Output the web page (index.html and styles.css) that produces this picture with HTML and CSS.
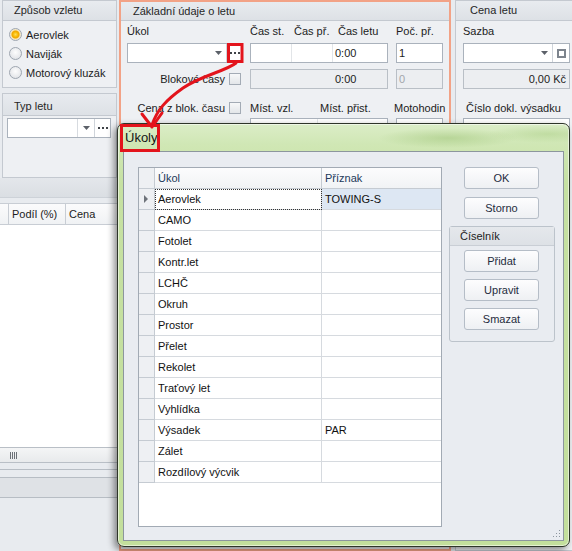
FILE: index.html
```html
<!DOCTYPE html>
<html lang="cs">
<head>
<meta charset="utf-8">
<title>Úkoly</title>
<link rel="stylesheet" href="styles.css">
</head>
<body>
<div class="form">
  <div class="col-left">
    <section class="grp grp-start">
      <div class="grp-head start-head">Způsob vzletu</div>
      <div class="radios">
        <div class="radio"><span class="rb rb-on"></span>Aerovlek</div>
        <div class="radio"><span class="rb"></span>Naviják</div>
        <div class="radio"><span class="rb"></span>Motorový kluzák</div>
      </div>
    </section>
    <section class="grp grp-typ">
      <div class="grp-head typ-head">Typ letu</div>
      <div class="typ-body">
        <div class="combo combo-typ">
          <span class="combo-val"></span>
          <span class="cbtn dd dd-sep"><svg width="7" height="4" viewBox="0 0 7 4"><path d="M0 0H7L3.5 4Z" fill="#5c6169"/></svg></span>
          <span class="cbtn ell"><svg width="10" height="2" viewBox="0 0 10 2"><rect x="0" width="2" height="2" fill="#3f4348"/><rect x="4" width="2" height="2" fill="#3f4348"/><rect x="8" width="2" height="2" fill="#3f4348"/></svg></span>
        </div>
      </div>
    </section>
    <div class="band"></div>
    <div class="lgrid-head"><span class="lc0"></span><span class="lc1">Podíl (%)</span><span class="lc2">Cena</span></div>
    <div class="lgrid-body"></div>
    <div class="hscroll"><span class="grip"></span></div>
    <div class="foot"></div>
    <div class="foot-band"></div>
  </div>

  <section class="grp-main">
    <div class="grp-head main-head">Základní údaje o letu</div>
    <div class="main-body">
      <div class="mrow mrow-lbl">
        <div class="ca">Úkol</div>
        <div class="cb sublbls"><span class="s44">Čas st.</span><span class="s44">Čas př.</span><span>Čas letu</span></div>
        <div class="cc">Poč. př.</div>
      </div>
      <div class="mrow mrow-fld">
        <div class="ca">
          <div class="combo combo-ukol">
            <span class="combo-val"></span>
            <span class="cbtn dd"><svg width="7" height="4" viewBox="0 0 7 4"><path d="M0 0H7L3.5 4Z" fill="#5c6169"/></svg></span>
            <span class="cbtn ell"><svg width="10" height="2" viewBox="0 0 10 2"><rect x="0" width="2" height="2" fill="#3f4348"/><rect x="4" width="2" height="2" fill="#3f4348"/><rect x="8" width="2" height="2" fill="#3f4348"/></svg></span>
          </div>
        </div>
        <div class="cb"><div class="field timefield"><span class="seg seg1"></span><span class="seg seg1"></span><span class="seg seg3">0:00</span></div></div>
        <div class="cc"><div class="field">1</div></div>
      </div>
      <div class="mrow mrow-fld2">
        <div class="ca chk-cell"><span>Blokové časy</span><span class="chk"></span></div>
        <div class="cb"><div class="field dis time-dis">0:00</div></div>
        <div class="cc"><div class="field dis gray">0</div></div>
      </div>
      <div class="mrow mrow-lbl2">
        <div class="ca chk-cell"><span>Cena z blok. času</span><span class="chk"></span></div>
        <div class="cb sublbls"><span class="s70">Míst. vzl.</span><span>Míst. přist.</span></div>
        <div class="cc motoh">Motohodin</div>
      </div>
      <div class="mrow mrow-fld3">
        <div class="ca"></div>
        <div class="cb"><div class="field split"><span class="seg segA"></span><span class="seg"></span></div></div>
        <div class="cc"><div class="field"></div></div>
      </div>
    </div>
  </section>

  <section class="grp grp-price">
    <div class="grp-head price-head">Cena letu</div>
    <div class="price-body">
      <div class="plbl">Sazba</div>
      <div class="combo combo-sazba">
        <span class="combo-val"></span>
        <span class="cbtn dd"><svg width="7" height="4" viewBox="0 0 7 4"><path d="M0 0H7L3.5 4Z" fill="#5c6169"/></svg></span>
        <span class="cbtn sq"><span class="sqicon"></span></span>
      </div>
      <div class="field dis price-val">0,00 Kč</div>
      <div class="plbl plbl2">Číslo dokl. výsadku</div>
      <div class="field price-f"></div>
    </div>
  </section>
</div>

<div class="dialog">
  <div class="dlg-title">Úkoly</div>
  <div class="dlg-client">
    <div class="dgrid">
      <div class="grow grow-h"><div class="gc rh"></div><div class="gc">Úkol</div><div class="gc">Příznak</div></div>
      <div class="grow cur"><div class="gc rh"><span class="tri"></span></div><div class="gc focus">Aerovlek</div><div class="gc sel">TOWING-S</div></div>
      <div class="grow"><div class="gc rh"></div><div class="gc">CAMO</div><div class="gc"></div></div>
      <div class="grow"><div class="gc rh"></div><div class="gc">Fotolet</div><div class="gc"></div></div>
      <div class="grow"><div class="gc rh"></div><div class="gc">Kontr.let</div><div class="gc"></div></div>
      <div class="grow"><div class="gc rh"></div><div class="gc">LCHČ</div><div class="gc"></div></div>
      <div class="grow"><div class="gc rh"></div><div class="gc">Okruh</div><div class="gc"></div></div>
      <div class="grow"><div class="gc rh"></div><div class="gc">Prostor</div><div class="gc"></div></div>
      <div class="grow"><div class="gc rh"></div><div class="gc">Přelet</div><div class="gc"></div></div>
      <div class="grow"><div class="gc rh"></div><div class="gc">Rekolet</div><div class="gc"></div></div>
      <div class="grow"><div class="gc rh"></div><div class="gc">Traťový let</div><div class="gc"></div></div>
      <div class="grow"><div class="gc rh"></div><div class="gc">Vyhlídka</div><div class="gc"></div></div>
      <div class="grow"><div class="gc rh"></div><div class="gc">Výsadek</div><div class="gc">PAR</div></div>
      <div class="grow"><div class="gc rh"></div><div class="gc">Zálet</div><div class="gc"></div></div>
      <div class="grow"><div class="gc rh"></div><div class="gc">Rozdílový výcvik</div><div class="gc"></div></div>
    </div>
    <div class="dside">
      <button class="btn">OK</button>
      <button class="btn btn-storno">Storno</button>
      <div class="cis">
        <div class="cis-head">Číselník</div>
        <button class="btn btn-first">Přidat</button>
        <button class="btn">Upravit</button>
        <button class="btn">Smazat</button>
      </div>
    </div>
    <svg class="rsgrip" width="9" height="9" viewBox="0 0 9 9">
      <rect x="7" y="1" width="1" height="1" fill="#8d969f"/>
      <rect x="4" y="4" width="1" height="1" fill="#8d969f"/>
      <rect x="7" y="4" width="1" height="1" fill="#8d969f"/>
      <rect x="1" y="7" width="1" height="1" fill="#8d969f"/>
      <rect x="4" y="7" width="1" height="1" fill="#8d969f"/>
      <rect x="7" y="7" width="1" height="1" fill="#8d969f"/>
    </svg>
  </div>
</div>

<svg class="annot" width="572" height="551" viewBox="0 0 572 551">
  <rect x="228.5" y="44.5" width="13.5" height="17" fill="none" stroke="#e3141c" stroke-width="3"/>
  <rect x="121.5" y="125.5" width="37" height="25" fill="none" stroke="#e3141c" stroke-width="3"/>
  <path d="M236 63 C 226 71, 200 76, 183 88 S 157 110, 152 125" fill="none" stroke="#e3141c" stroke-width="3" stroke-linecap="round"/>
  <path d="M142 114 L152 127 L162 113" fill="none" stroke="#e3141c" stroke-width="3" stroke-linecap="round" stroke-linejoin="round"/>
</svg>
</body>
</html>
```

FILE: styles.css
```css
body {
  margin: 0;
  width: 572px;
  height: 551px;
  overflow: hidden;
  position: relative;
  background: #e8ebef;
  font-family: "Liberation Sans", Arial, sans-serif;
  font-size: 11px;
  line-height: 14px;
  color: #1c1c1c;
}

.form {
  display: flex;
  align-items: flex-start;
  height: 551px;
}

/* ---------- generic group box ---------- */
.grp {
  box-sizing: border-box;
  border: 1px solid #c4c9d0;
  background: #eef0f3;
}
.grp-head {
  box-sizing: border-box;
  height: 20px;
  line-height: 19px;
  border-bottom: 1px solid #c4c9d0;
  background: linear-gradient(#e8ebef, #dde1e6);
  color: #262626;
  white-space: nowrap;
}

/* ---------- left column ---------- */
.col-left {
  width: 119px;
  flex: none;
  display: flex;
  flex-direction: column;
}
.grp-start {
  margin-left: 2px;
  width: 115px;
  height: 88px;
}
.start-head { padding-left: 11px; }
.radios { padding: 4px 0 0 6px; }
.radio {
  display: flex;
  align-items: center;
  gap: 4px;
  height: 19px;
  white-space: nowrap;
}
.rb {
  box-sizing: border-box;
  width: 13px;
  height: 13px;
  border-radius: 50%;
  border: 1px solid #9ea6b0;
  background: radial-gradient(circle at 50% 40%, #fdfdfd, #dadde2);
}
.rb-on {
  background: radial-gradient(circle, #ffdc5c 0, #f6b800 2.5px, #f0a400 3.5px, #f9e3a6 4.5px, #eceef1 6px);
}

.grp-typ {
  margin: 5px 0 0 2px;
  width: 115px;
  height: 85px;
}
.typ-head {
  height: 22px;
  padding: 3px 0 0 11px;
  line-height: 18px;
}
.typ-body { padding: 2px 0 0 4px; }

.band {
  height: 19px;
  background: linear-gradient(#e4e7eb, #dadee3);
  border-bottom: 1px solid #cdd2d8;
}
.lgrid-head {
  margin-top: 5px;
  display: flex;
  box-sizing: border-box;
  height: 22px;
  line-height: 20px;
  border-top: 1px solid #c8cdd4;
  border-bottom: 1px solid #c8cdd4;
  background: linear-gradient(#fbfbfc, #f0f2f4);
  white-space: nowrap;
}
.lc0 {
  box-sizing: border-box;
  width: 9px;
  border-right: 1px solid #c8cdd4;
}
.lc1 {
  box-sizing: border-box;
  width: 57px;
  padding-left: 3px;
  border-right: 1px solid #c8cdd4;
}
.lc2 { padding-left: 3px; }
.lgrid-body {
  height: 222px;
  background: #fff;
}
.hscroll {
  box-sizing: border-box;
  height: 16px;
  border-top: 1px solid #b9bfc6;
  border-bottom: 1px solid #b9bfc6;
  background: linear-gradient(#f4f5f6, #e8eaec);
}
.grip {
  display: block;
  margin: 4px 0 0 10px;
  width: 7px;
  height: 7px;
  background: repeating-linear-gradient(90deg, #6c7177 0 1px, transparent 1px 2px);
}
.foot {
  margin-top: 6px;
  height: 7px;
  border-top: 1px solid #b7bdc4;
}
.foot-band {
  height: 19px;
  border-top: 1px solid #b7bdc4;
  border-bottom: 1px solid #b7bdc4;
  background: #dfe2e6;
}

/* ---------- combo / fields ---------- */
.combo {
  display: flex;
  box-sizing: border-box;
  height: 20px;
  border: 1px solid #aab2bc;
  background: #fff;
}
.combo-val { flex: 1; }
.cbtn {
  flex: none;
  width: 16px;
  display: flex;
  align-items: center;
  justify-content: center;
}
.dd-sep { border-left: 1px solid #d7dbe0; }
.ell {
  width: 15px;
  border-left: 1px solid #cfd4da;
}
.combo-typ { width: 104px; }
.combo-ukol { width: 116px; }
.sq { border-left: 1px solid #cfd4da; }
.sqicon {
  box-sizing: border-box;
  width: 9px;
  height: 9px;
  border: 2px solid #7d848d;
}

.field {
  box-sizing: border-box;
  height: 20px;
  border: 1px solid #aab2bc;
  background: #fff;
  line-height: 18px;
  padding: 0 2px;
  white-space: nowrap;
  overflow: hidden;
}
.field.dis {
  background: #eceef1;
  border-color: #b9bfc6;
}
.gray { color: #a3a7ac; }

/* ---------- main group ---------- */
.grp-main {
  flex: none;
  box-sizing: border-box;
  width: 332px;
  height: 551px;
  border: 2px solid #f2a286;
  background: #eef0f3;
}
.main-head {
  height: 19px;
  line-height: 18px;
  padding-left: 12px;
}
.main-body { padding: 3px 0 0 6px; }
.mrow { display: flex; white-space: nowrap; }
.ca { width: 123px; flex: none; }
.cb { width: 146px; flex: none; }
.cc { width: 47px; flex: none; }
.cb .field { width: 138px; }
.cc .field { width: 47px; }
.mrow-lbl { height: 14px; }
.mrow-fld { margin-top: 5px; height: 20px; }
.mrow-fld2 { margin-top: 6px; height: 20px; }
.mrow-lbl2 { margin-top: 12px; height: 14px; }
.mrow-fld3 { margin-top: 3px; height: 20px; }
.sublbls { display: flex; }
.s44 { width: 44px; }
.s70 { width: 70px; }
.chk-cell {
  box-sizing: border-box;
  display: flex;
  justify-content: flex-end;
  align-items: center;
  gap: 4px;
  padding-right: 9px;
}
.chk {
  box-sizing: border-box;
  width: 12px;
  height: 12px;
  border: 1px solid #a3abb5;
  background: linear-gradient(#f7f8f9, #e3e6e9);
}
.motoh { margin-left: -2px; }
.timefield, .split {
  display: flex;
  padding: 0;
}
.seg { box-sizing: border-box; height: 18px; }
.seg1 {
  width: 41px;
  border-right: 1px solid #e2e5e8;
}
.seg3 { flex: 1; padding-left: 2px; }
.segA {
  width: 67px;
  border-right: 1px solid #e2e5e8;
}
.time-dis { padding-left: 84px; }

/* ---------- price group ---------- */
.grp-price {
  flex: none;
  margin-left: 4px;
  width: 125px;
  height: 551px;
}
.price-head { padding-left: 14px; }
.price-body { padding: 3px 0 0 7px; }
.plbl { height: 14px; white-space: nowrap; }
.combo-sazba { margin-top: 5px; width: 107px; }
.price-val {
  margin-top: 6px;
  width: 107px;
  text-align: right;
  padding-right: 3px;
}
.plbl2 { margin-top: 12px; padding-left: 3px; }
.price-f { margin-top: 3px; width: 107px; }

/* ---------- dialog ---------- */
.dialog {
  position: absolute;
  left: 117px;
  top: 123px;
  width: 453px;
  height: 424px;
  box-sizing: border-box;
  border: 1px solid #2e3529;
  border-radius: 7px;
  padding: 0 5px 5px;
  display: flex;
  flex-direction: column;
  background:
    radial-gradient(ellipse 70px 10px at 330px 14px, rgba(150, 190, 110, 0.45), transparent),
    radial-gradient(ellipse 60px 9px at 430px 10px, rgba(160, 200, 120, 0.4), transparent),
    linear-gradient(180deg, #dbedc7 0px, #d0e7b5 20px, #c6e1a2 60px, #c3df9c 100%);
  box-shadow: -3px 3px 7px rgba(0, 0, 0, 0.45), inset 0 0 0 1px rgba(255, 255, 255, 0.55);
}
.dlg-title {
  flex: none;
  height: 27px;
  line-height: 28px;
  font-size: 13px;
  padding-left: 2px;
  color: #151515;
}
.dlg-client {
  position: relative;
  flex: 1;
  border: 1px solid #8c969e;
  background: #e9ecf1;
  display: flex;
  align-items: flex-start;
  gap: 7px;
  padding: 15px 0 0 14px;
}
.dgrid {
  flex: none;
  box-sizing: border-box;
  width: 304px;
  height: 360px;
  border: 1px solid #a2aab4;
  background: #fff;
}
.grow {
  display: grid;
  grid-template-columns: 16px 167px 1fr;
  height: 21px;
}
.gc {
  box-sizing: border-box;
  height: 21px;
  border-right: 1px solid #d6dadf;
  border-bottom: 1px solid #d6dadf;
  padding-left: 3px;
  line-height: 20px;
  white-space: nowrap;
  overflow: hidden;
  color: #111;
}
.gc:last-child { border-right: none; }
.grow-h .gc {
  background: linear-gradient(#fcfcfd, #f1f3f5);
  border-color: #c5cbd2;
  color: #22395a;
}
.gc.rh {
  padding: 0;
  background: #eef0f3;
  border-color: #c5cbd2;
}
.focus {
  outline: 1px dotted #333;
  outline-offset: -1px;
}
.sel { background: #dde7f3; }
.tri {
  display: block;
  width: 0;
  height: 0;
  margin: 6px 0 0 5px;
  border-left: 4px solid #6e737a;
  border-top: 4px solid transparent;
  border-bottom: 4px solid transparent;
}

.dside {
  flex: none;
  width: 106px;
  display: flex;
  flex-direction: column;
}
.btn {
  display: block;
  box-sizing: border-box;
  width: 75px;
  height: 22px;
  margin: 0 0 0 15px;
  padding: 0;
  border: 1px solid #b5bdc7;
  border-radius: 3px;
  background: linear-gradient(#fdfdfe, #eef0f3);
  font: 11px/20px "Liberation Sans", Arial, sans-serif;
  color: #1f2c3d;
  text-align: center;
}
.btn-storno { margin-top: 8px; }
.cis {
  margin-top: 7px;
  box-sizing: border-box;
  height: 116px;
  border: 1px solid #bcc3cb;
  border-radius: 3px;
}
.cis-head {
  box-sizing: border-box;
  height: 19px;
  line-height: 18px;
  padding-left: 10px;
  border-bottom: 1px solid #c9ced5;
  background: linear-gradient(#e5e8ec, #dde1e6);
}
.cis .btn { margin: 7px 0 0 14px; }
.cis .btn-first { margin-top: 4px; }
.rsgrip {
  position: absolute;
  right: 2px;
  bottom: 2px;
}

.annot {
  position: absolute;
  left: 0;
  top: 0;
}
```
